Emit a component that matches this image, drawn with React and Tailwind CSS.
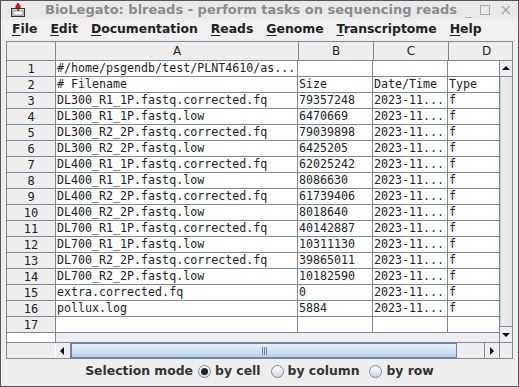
import React from 'react';

const rows = [
  ['#/home/psgendb/test/PLNT4610/as...', '', '', ''],
  ['# Filename', 'Size', 'Date/Time', 'Type'],
  ['DL300_R1_1P.fastq.corrected.fq', '79357248', '2023-11...', 'f'],
  ['DL300_R1_1P.fastq.low', '6470669', '2023-11...', 'f'],
  ['DL300_R2_2P.fastq.corrected.fq', '79039898', '2023-11...', 'f'],
  ['DL300_R2_2P.fastq.low', '6425205', '2023-11...', 'f'],
  ['DL400_R1_1P.fastq.corrected.fq', '62025242', '2023-11...', 'f'],
  ['DL400_R1_1P.fastq.low', '8086630', '2023-11...', 'f'],
  ['DL400_R2_2P.fastq.corrected.fq', '61739406', '2023-11...', 'f'],
  ['DL400_R2_2P.fastq.low', '8018640', '2023-11...', 'f'],
  ['DL700_R1_1P.fastq.corrected.fq', '40142887', '2023-11...', 'f'],
  ['DL700_R1_1P.fastq.low', '10311130', '2023-11...', 'f'],
  ['DL700_R2_2P.fastq.corrected.fq', '39865011', '2023-11...', 'f'],
  ['DL700_R2_2P.fastq.low', '10182590', '2023-11...', 'f'],
  ['extra.corrected.fq', '0', '2023-11...', 'f'],
  ['pollux.log', '5884', '2023-11...', 'f'],
  ['', '', '', ''],
];

const menus = [
  ['F', 'ile'],
  ['E', 'dit'],
  ['D', 'ocumentation'],
  ['R', 'eads'],
  ['G', 'enome'],
  ['T', 'ranscriptome'],
  ['H', 'elp'],
];

function AppIcon() {
  return (
    <svg width="16" height="16" viewBox="0 0 16 16">
      <rect x="1.5" y="6.5" width="13" height="8" fill="#d8d8d8" stroke="#333" />
      <rect x="3" y="9" width="10" height="4" fill="#fff" stroke="#555" strokeWidth="0.6" />
      <path d="M8 1 L10.5 5 L8 7.5 L5.5 5 Z" fill="#d11" stroke="#600" strokeWidth="0.6" />
      <rect x="7.4" y="6" width="1.2" height="3" fill="#333" />
    </svg>
  );
}

function Radio({ checked }) {
  return (
    <span className="inline-flex h-[13px] w-[13px] items-center justify-center rounded-full border border-[#7a8a99] bg-gradient-to-b from-[#ffffff] to-[#c8d8ea]">
      {checked && <span className="h-[7px] w-[7px] rounded-full bg-[#222]" />}
    </span>
  );
}

function Arrow({ dir }) {
  const pts = {
    up: '1,6 5,2 9,6',
    down: '1,3 5,7 9,3',
    left: '6,1 2,5 6,9',
    right: '3,1 7,5 3,9',
  }[dir];
  return (
    <svg width="10" height="10" viewBox="0 0 10 10">
      <polygon points={pts} fill="#111" />
    </svg>
  );
}

export default function App() {
  const mono = { fontFamily: '"DejaVu Sans Mono", monospace' };
  return (
    <div className="flex h-[387px] w-[519px] flex-col overflow-hidden border border-[#555] bg-[#eeeeee] font-['DejaVu_Sans',sans-serif] text-[#222]">
      {/* title bar */}
      <div className="flex h-[18px] items-center bg-[#e9e9e9] pl-[9px] pr-[6px]">
        <AppIcon />
        <span className="ml-[19px] text-[13px] font-bold text-[#8a8a8a]">
          BioLegato: blreads - perform tasks on sequencing reads
        </span>
        <span className="ml-auto flex items-center gap-[9px] text-[13px] text-[#a8a8a8]">
          <span className="leading-none">_</span>
          <span className="h-[10px] w-[10px] border border-[#a8a8a8]" />
          <span className="text-[15px] leading-none">×</span>
        </span>
      </div>

      {/* menu bar */}
      <div className="flex h-[20px] items-center gap-[13px] bg-[#f0f0f0] pl-[11px] text-[12.4px] font-bold text-[#222]">
        {menus.map(([k, rest]) => (
          <span key={k + rest}>
            <span className="underline underline-offset-2">{k}</span>
            {rest}
          </span>
        ))}
      </div>

      {/* scroll pane */}
      <div className="ml-[5px] mt-[2px] flex w-[507px] flex-col border border-[#7a8a99]">
        {/* column header */}
        <div className="flex h-[19px] overflow-hidden border-b border-[#7a8a99] text-[12px]">
          <div className="w-[49px] shrink-0 border-r border-[#7a8a99] bg-[#eeeeee]" />
          <div className="flex h-full w-[243px] shrink-0 items-center justify-center border-r border-[#7a8a99]">A</div>
          <div className="flex h-full w-[75px] shrink-0 items-center justify-center border-r border-[#7a8a99]">B</div>
          <div className="flex h-full w-[75px] shrink-0 items-center justify-center border-r border-[#7a8a99]">C</div>
          <div className="flex h-full w-[75px] shrink-0 items-center justify-center">D</div>
        </div>

        {/* body */}
        <div className="flex h-[281px]">
          <div className="w-[49px] shrink-0 border-r border-[#7a8a99] bg-white">
            {rows.map((_, i) => (
              <div
                key={i}
                className="flex h-[16px] items-center justify-center border-b border-[#7a8a99] bg-[#eeeeee] text-[12px]"
                style={mono}
              >
                {i + 1}
              </div>
            ))}
          </div>
          <div className="w-[443px] shrink-0 overflow-hidden bg-[#eeeeee]">
            {rows.map((r, i) => (
              <div key={i} className="flex h-[16px] bg-white text-[11.65px] leading-[15px]" style={mono}>
                <div className="w-[242px] shrink-0 overflow-hidden whitespace-nowrap border-b border-r border-[#7a8a99] pl-[1px]">{r[0]}</div>
                <div className="w-[75px] shrink-0 overflow-hidden whitespace-nowrap border-b border-r border-[#7a8a99] pl-[1px]">{r[1]}</div>
                <div className="w-[75px] shrink-0 overflow-hidden whitespace-nowrap border-b border-r border-[#7a8a99] pl-[1px]">{r[2]}</div>
                <div className="w-[75px] shrink-0 overflow-hidden whitespace-nowrap border-b border-r border-[#7a8a99] pl-[1px]">{r[3]}</div>
              </div>
            ))}
          </div>
          {/* vertical scrollbar */}
          <div className="flex w-[13px] shrink-0 flex-col border-l border-[#7a8a99] bg-[#eeeeee]">
            <div className="flex h-[16px] items-center justify-center border-b border-[#7a8a99]">
              <Arrow dir="up" />
            </div>
            <div className="flex-1 border-l border-[#b8cfe5] bg-gradient-to-r from-[#eeeeee] to-[#e4e4e4]" />
            <div className="flex h-[16px] items-center justify-center border-t border-[#7a8a99]">
              <Arrow dir="down" />
            </div>
          </div>
        </div>

        {/* horizontal scrollbar */}
        <div className="flex h-[16px] border-t border-[#7a8a99]">
          <div className="w-[49px] shrink-0 border-r border-[#ffffff] bg-[#eeeeee]" />
          <div className="flex w-[443px] shrink-0 bg-[#eeeeee]">
            <div className="flex w-[15px] items-center justify-center border-r border-[#7a8a99]">
              <Arrow dir="left" />
            </div>
            <div className="relative flex w-[386px] items-center justify-center border border-[#6382bf] bg-gradient-to-b from-[#ebf1f8] to-[#b8cfe5]">
              <div className="flex gap-[1px]">
                <span className="h-[8px] w-[1px] bg-[#6382bf]" />
                <span className="h-[8px] w-[1px] bg-[#6382bf]" />
                <span className="h-[8px] w-[1px] bg-[#6382bf]" />
              </div>
            </div>
            <div className="flex-1" />
            <div className="flex w-[15px] items-center justify-center border-l border-[#7a8a99]">
              <Arrow dir="right" />
            </div>
          </div>
          <div className="flex-1 border-l border-[#7a8a99] bg-[#eeeeee]" />
        </div>
      </div>

      {/* selection mode */}
      <div className="flex flex-1 items-center justify-center gap-[5px] pb-[2px] text-[12.4px] font-bold text-[#333]">
        <span>Selection mode</span>
        <span className="flex items-center gap-[4px]">
          <Radio checked />
          <span>by cell</span>
        </span>
        <span className="ml-[5px] flex items-center gap-[4px]">
          <Radio />
          <span>by column</span>
        </span>
        <span className="ml-[5px] flex items-center gap-[4px]">
          <Radio />
          <span>by row</span>
        </span>
      </div>
    </div>
  );
}
